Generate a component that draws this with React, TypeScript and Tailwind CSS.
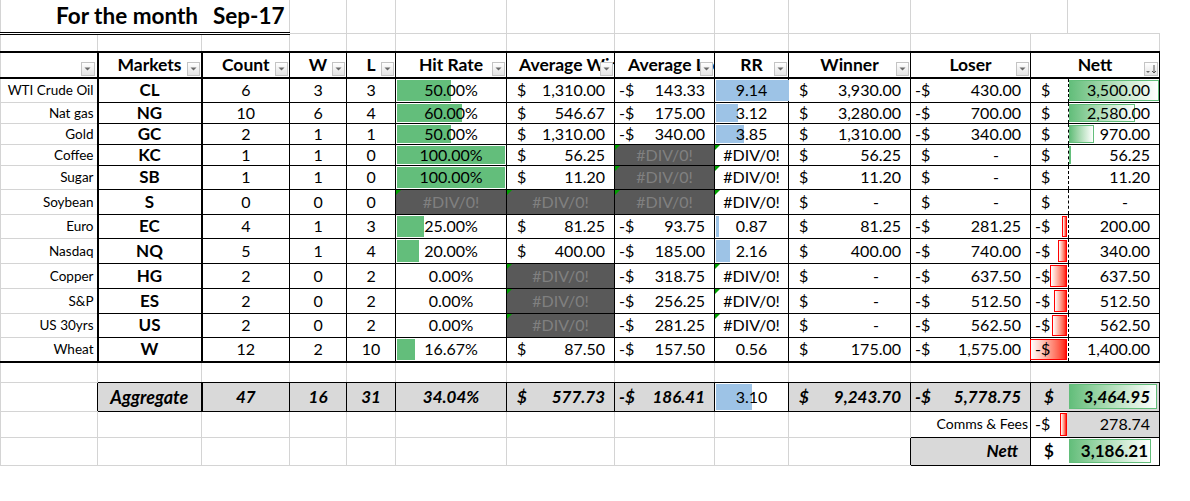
import React from 'react';

type Row = {
  label: string;
  code: string;
  count: number;
  w: number;
  l: number;
  hit: number | null;
  avgW: number | null;
  avgL: number | null;
  rr: number | null;
  winner: number;
  loser: number;
  nett: number;
  h: string;
};

const rows: Row[] = [
  { label: 'WTI Crude Oil', code: 'CL', count: 6, w: 3, l: 3, hit: 0.5, avgW: 1310, avgL: -143.33, rr: 9.14, winner: 3930, loser: -430, nett: 3500, h: 'h-[24px]' },
  { label: 'Nat gas', code: 'NG', count: 10, w: 6, l: 4, hit: 0.6, avgW: 546.67, avgL: -175, rr: 3.12, winner: 3280, loser: -700, nett: 2580, h: 'h-[21px]' },
  { label: 'Gold', code: 'GC', count: 2, w: 1, l: 1, hit: 0.5, avgW: 1310, avgL: -340, rr: 3.85, winner: 1310, loser: -340, nett: 970, h: 'h-[21px]' },
  { label: 'Coffee', code: 'KC', count: 1, w: 1, l: 0, hit: 1, avgW: 56.25, avgL: null, rr: null, winner: 56.25, loser: 0, nett: 56.25, h: 'h-[21px]' },
  { label: 'Sugar', code: 'SB', count: 1, w: 1, l: 0, hit: 1, avgW: 11.2, avgL: null, rr: null, winner: 11.2, loser: 0, nett: 11.2, h: 'h-[24px]' },
  { label: 'Soybean', code: 'S', count: 0, w: 0, l: 0, hit: null, avgW: null, avgL: null, rr: null, winner: 0, loser: 0, nett: 0, h: 'h-[25px]' },
  { label: 'Euro', code: 'EC', count: 4, w: 1, l: 3, hit: 0.25, avgW: 81.25, avgL: -93.75, rr: 0.87, winner: 81.25, loser: -281.25, nett: -200, h: 'h-[24px]' },
  { label: 'Nasdaq', code: 'NQ', count: 5, w: 1, l: 4, hit: 0.2, avgW: 400, avgL: -185, rr: 2.16, winner: 400, loser: -740, nett: -340, h: 'h-[25px]' },
  { label: 'Copper', code: 'HG', count: 2, w: 0, l: 2, hit: 0, avgW: null, avgL: -318.75, rr: null, winner: 0, loser: -637.5, nett: -637.5, h: 'h-[25px]' },
  { label: 'S&P', code: 'ES', count: 2, w: 0, l: 2, hit: 0, avgW: null, avgL: -256.25, rr: null, winner: 0, loser: -512.5, nett: -512.5, h: 'h-[25px]' },
  { label: 'US 30yrs', code: 'US', count: 2, w: 0, l: 2, hit: 0, avgW: null, avgL: -281.25, rr: null, winner: 0, loser: -562.5, nett: -562.5, h: 'h-[24px]' },
  { label: 'Wheat', code: 'W', count: 12, w: 2, l: 10, hit: 1 / 6, avgW: 87.5, avgL: -157.5, rr: 0.56, winner: 175, loser: -1575, nett: -1400, h: 'h-[25px]' },
];

const fmt = (v: number) =>
  Math.abs(v).toLocaleString('en-US', { minimumFractionDigits: 2, maximumFractionDigits: 2 });

const Money = ({ v }: { v: number }) => (
  <div className="relative flex items-center justify-between pl-[4px] pr-[9px] whitespace-nowrap">
    <span>
      <span className={v < 0 ? '' : 'invisible'}>-</span>$
    </span>
    {v === 0 ? <span className="mr-[22px]">-</span> : <span>{fmt(v)}</span>}
  </div>
);

const Tri = () => (
  <span className="absolute left-0 top-0 w-0 h-0 border-t-[5px] border-r-[5px] border-t-[#00a000] border-r-transparent" />
);

const FilterBtn = () => (
  <span className="absolute right-[1px] bottom-[1px] w-[13px] h-[14px] border border-[#c4c4c4] bg-linear-to-b from-white to-[#e4e4e4] flex items-center justify-center">
    <svg width="7" height="4" viewBox="0 0 7 4">
      <path d="M0.5 0.5h6L3.5 3.5z" fill="#6a6a6a" />
    </svg>
  </span>
);

const SortBtn = () => (
  <span className="absolute right-[1px] bottom-[1px] w-[14px] h-[14px] border border-[#c4c4c4] bg-linear-to-b from-white to-[#e4e4e4] flex items-center justify-center">
    <svg width="12" height="12" viewBox="0 0 12 12">
      <path d="M1 8h4L3 10z" fill="#6a6a6a" />
      <path d="M9 2v8M7 8l2 2 2-2" stroke="#555" strokeWidth="1" fill="none" />
    </svg>
  </span>
);

const Div0 = () => (
  <td className="p-0 relative border border-black bg-[#595959] text-[#808080] text-center">
    <Tri />
    #DIV/0!
  </td>
);

const Gray = ({ n, cls = '' }: { n: number; cls?: string }) => (
  <>
    {Array.from({ length: n }).map((_, i) => (
      <td key={i} className={`p-0 border border-[#d4d4d4] ${cls}`} />
    ))}
  </>
);

const Hd = ({ children, cls = '', btn = true, inner = 'text-center' }: { children?: React.ReactNode; cls?: string; btn?: boolean; inner?: string }) => (
  <td className={`p-0 relative border border-black border-t-2 border-b-2 font-bold text-[17.5px] ${cls}`}>
    <div className={`overflow-hidden whitespace-nowrap leading-[22px] ${inner}`}>{children}</div>
    {btn && <FilterBtn />}
  </td>
);

export default function App() {
  return (
    <div className="w-[1190px] h-[501px] bg-white overflow-hidden font-['Lato',sans-serif] text-black">
      <table className="table-fixed border-collapse w-[1159px] text-[16px] leading-[18px]">
        <colgroup>
          <col className="w-[97px]" />
          <col className="w-[104px]" />
          <col className="w-[88px]" />
          <col className="w-[57px]" />
          <col className="w-[49px]" />
          <col className="w-[111px]" />
          <col className="w-[108px]" />
          <col className="w-[100px]" />
          <col className="w-[74px]" />
          <col className="w-[122px]" />
          <col className="w-[120px]" />
          <col className="w-[37px]" />
          <col className="w-[92px]" />
        </colgroup>
        <tbody>
          {/* title */}
          <tr className="h-[33px]">
            <td colSpan={3} className="p-0 border border-[#d4d4d4] border-t-0 border-double border-b-[3px] border-b-black">
              <div className="flex items-center text-[22.5px] font-bold leading-[26px]">
                <span className="w-[201px] text-right pr-[4px]">For the month</span>
                <span className="pl-[11px]">Sep-17</span>
              </div>
            </td>
            <Gray n={7} cls="border-t-0" />
            <td colSpan={2} className="p-0 border border-[#d4d4d4] border-t-0" />
          </tr>
          <tr className="h-[19px]">
            <Gray n={11} />
            <td colSpan={2} className="p-0 border border-[#d4d4d4]" />
          </tr>

          {/* header */}
          <tr className="h-[26px]">
            <td className="p-0 relative border border-[#d4d4d4] border-t-2 border-b-2 border-t-black border-b-black">
              <span className="absolute right-[2px] bottom-[1px] w-[14px] h-[14px] border border-[#c4c4c4] bg-linear-to-b from-white to-[#e4e4e4] flex items-center justify-center">
                <svg width="7" height="4" viewBox="0 0 7 4">
                  <path d="M0.5 0.5h6L3.5 3.5z" fill="#6a6a6a" />
                </svg>
              </span>
            </td>
            <Hd cls="border-l-2">Markets</Hd>
            <Hd cls="border-l-2">Count</Hd>
            <Hd>W</Hd>
            <Hd>L</Hd>
            <Hd>Hit Rate</Hd>
            <Hd inner="text-left pl-[12px] pr-[14px]">Average Win</Hd>
            <Hd inner="text-left pl-[13px] pr-[14px]">Average Loss</Hd>
            <Hd>RR</Hd>
            <Hd>Winner</Hd>
            <Hd>Loser</Hd>
            <td colSpan={2} className="p-0 relative border border-black border-t-2 border-b-2 font-bold text-[17.5px]">
              <div className="text-center leading-[22px]">Nett</div>
              <SortBtn />
            </td>
          </tr>

          {/* data */}
          {rows.map((r, i) => {
            const last = i === rows.length - 1;
            const bb = last ? 'border-b-2' : '';
            const rrW = r.rr !== null ? ((r.rr - 0.56) / (9.14 - 0.56)) * 73 : 0;
            const posW = r.nett > 0 ? (r.nett / 3500) * 90 : 0;
            const negW = r.nett < 0 ? (-r.nett / 1400) * 37 : 0;
            return (
              <tr key={r.code} className={r.h}>
                <td className={`p-0 border border-[#d4d4d4] text-right pr-[3px] text-[13.5px] whitespace-nowrap ${last ? 'border-b-black border-b-2' : ''}`}>
                  {r.label}
                </td>
                <td className={`p-0 border border-black border-l-2 font-bold text-[17px] text-center ${bb}`}>{r.code}</td>
                <td className={`p-0 border border-black border-l-2 text-center ${bb}`}>{r.count}</td>
                <td className={`p-0 border border-black text-center ${bb}`}>{r.w}</td>
                <td className={`p-0 border border-black text-center ${bb}`}>{r.l}</td>
                {r.hit === null ? (
                  <Div0 />
                ) : (
                  <td className={`p-0 relative border border-black text-center ${bb}`}>
                    {r.hit > 0 && (
                      <div className="absolute left-[1px] top-[1px] bottom-[1px] bg-[#63BE7B]" style={{ width: r.hit * 108 }} />
                    )}
                    <div className="relative">{(r.hit * 100).toFixed(2)}%</div>
                  </td>
                )}
                {r.avgW === null ? (
                  <Div0 />
                ) : (
                  <td className={`p-0 border border-black ${bb}`}>
                    <Money v={r.avgW} />
                  </td>
                )}
                {r.avgL === null ? (
                  <Div0 />
                ) : (
                  <td className={`p-0 border border-black ${bb}`}>
                    <Money v={r.avgL} />
                  </td>
                )}
                <td className={`p-0 relative border border-black text-center ${bb}`}>
                  {r.rr === null ? (
                    <>
                      <Tri />
                      #DIV/0!
                    </>
                  ) : (
                    <>
                      {rrW >= 1 && (
                        <div className="absolute left-[1px] top-[1px] bottom-[1px] bg-[#9DC3E6]" style={{ width: rrW }} />
                      )}
                      <div className="relative">{r.rr.toFixed(2)}</div>
                    </>
                  )}
                </td>
                <td className={`p-0 border border-black ${bb}`}>
                  <Money v={r.winner} />
                </td>
                <td className={`p-0 border border-black ${bb}`}>
                  <Money v={r.loser} />
                </td>
                <td colSpan={2} className={`p-0 relative border border-black ${bb}`}>
                  {posW >= 1 && (
                    <div
                      className="absolute left-[38px] top-[1px] bottom-[1px] border border-[#63BE7B] bg-linear-to-r from-[#63BE7B] to-white"
                      style={{ width: posW }}
                    />
                  )}
                  {negW > 0 && (
                    <div
                      className="absolute right-[92px] top-[1px] bottom-[1px] border border-[#FF0000] bg-linear-to-l from-[#FF0000] to-white"
                      style={{ width: negW }}
                    />
                  )}
                  <div className="absolute left-[37px] top-0 bottom-0 border-l border-dashed border-black" />
                  <Money v={r.nett} />
                </td>
              </tr>
            );
          })}

          {/* spacer */}
          <tr className="h-[20px]">
            <td className="p-0 border border-[#d4d4d4]" />
            <Gray n={10} cls="border-b-black" />
            <td colSpan={2} className="p-0 border border-[#d4d4d4] border-b-black" />
          </tr>

          {/* aggregate */}
          <tr className="h-[29px] font-bold italic text-[17px]">
            <td className="p-0 border border-[#d4d4d4] border-r-black" />
            <td className="p-0 border border-black bg-[#d9d9d9] text-center text-[18px]">Aggregate</td>
            <td className="p-0 border border-black border-l-2 bg-[#d9d9d9] text-center">47</td>
            <td className="p-0 border border-black bg-[#d9d9d9] text-center">16</td>
            <td className="p-0 border border-black bg-[#d9d9d9] text-center">31</td>
            <td className="p-0 border border-black bg-[#d9d9d9] text-center">34.04%</td>
            <td className="p-0 border border-black bg-[#d9d9d9]">
              <Money v={577.73} />
            </td>
            <td className="p-0 border border-black bg-[#d9d9d9]">
              <Money v={-186.41} />
            </td>
            <td className="p-0 relative border border-black bg-white text-center font-normal not-italic text-[16px]">
              <div className="absolute left-[1px] top-[1px] bottom-[1px] w-[36px] bg-[#9DC3E6]" />
              <div className="relative">3.10</div>
            </td>
            <td className="p-0 border border-black bg-[#d9d9d9]">
              <Money v={9243.7} />
            </td>
            <td className="p-0 border border-black bg-[#d9d9d9]">
              <Money v={-5778.75} />
            </td>
            <td className="p-0 border border-black border-r-[#d9d9d9] bg-[#d9d9d9] text-center">$</td>
            <td className="p-0 border border-black bg-[#d9d9d9]">
              <div className="ml-[1px] mr-[2px] h-[25px] border border-[#63BE7B] bg-linear-to-r from-[#63BE7B] to-white flex items-center justify-end pr-[6px]">
                3,464.95
              </div>
            </td>
          </tr>

          {/* comms */}
          <tr className="h-[26px]">
            <Gray n={10} />
            <td className="p-0 border border-[#d4d4d4] border-t-black border-b-black border-r-black text-right pr-[2px] text-[14px] whitespace-nowrap">
              Comms &amp; Fees
            </td>
            <td className="p-0 relative border border-black border-r-[#d9d9d9]">
              <div className="absolute right-0 top-[1px] bottom-[1px] w-[7px] border border-[#FF0000] bg-linear-to-l from-[#FF0000] to-white" />
              <div className="relative pl-[4px]">-$</div>
            </td>
            <td className="p-0 border border-black bg-[#d9d9d9] text-right pr-[9px]">278.74</td>
          </tr>

          {/* nett */}
          <tr className="h-[28px] text-[17px]">
            <Gray n={9} />
            <td className="p-0 border border-[#d4d4d4] border-r-black" />
            <td className="p-0 border border-black bg-[#d9d9d9] text-right pr-[12px] font-bold italic">Nett</td>
            <td className="p-0 border border-black border-r-white text-center font-bold">$</td>
            <td className="p-0 border border-black">
              <div className="ml-[1px] mr-[8px] h-[24px] border border-[#63BE7B] bg-linear-to-r from-[#63BE7B] to-white flex items-center justify-end pr-[2px] font-bold">
                3,186.21
              </div>
            </td>
          </tr>
        </tbody>
      </table>
    </div>
  );
}
